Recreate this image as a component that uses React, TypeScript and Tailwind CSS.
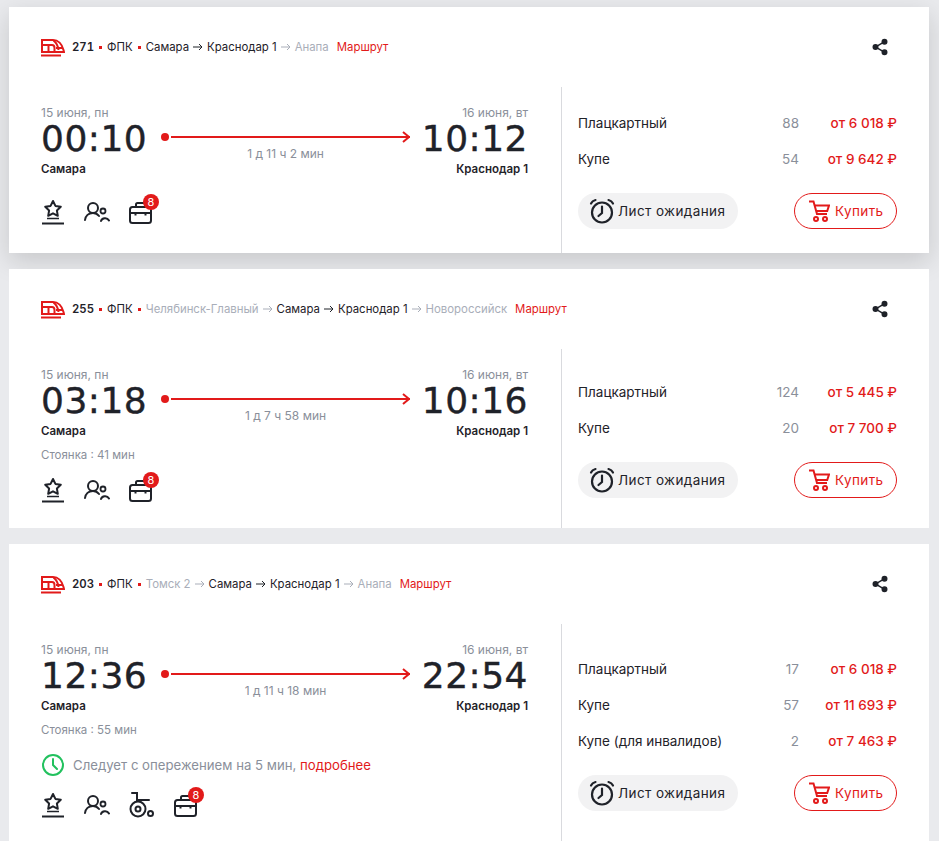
import { Share2 } from "lucide-react";

const FONT = "font-['Inter','Noto_Sans',sans-serif]";

function Logo() {
  return (
    <svg width="24" height="18" viewBox="0 0 24 18" fill="none" className="shrink-0 text-[#e21a1a]">
      <path d="M1 13V1h11c5 0 9 4 10.500 10l.5 2H1Z" stroke="currentColor" strokeWidth="2" />
      <path d="M7.500 13V6h3.500c1.500 0 2.500 1.500 2.500 3v4M12.500 1.500c2.500 2 4.500 5 5 9.500M2 6h9M15 9h7" stroke="currentColor" strokeWidth="2" />
      <rect x="0" y="15.500" width="20" height="2" fill="currentColor" />
    </svg>
  );
}

function StarIcon() {
  return (
    <svg width="24" height="26" viewBox="0 0 24 26" fill="none" stroke="#1f2229" strokeWidth="2">
      <path d="M12 2l2.400 4.900 5.400.8-3.900 3.800.9 5.300-4.800-2.500-4.800 2.500.9-5.300-3.900-3.800 5.400-.8z" strokeLinejoin="round" />
      <path d="M6 19.500h12" strokeWidth="1.500" />
      <path d="M1 24.500h22" />
    </svg>
  );
}

function PeopleIcon() {
  return (
    <svg width="26" height="22" viewBox="0 0 26 22" fill="none" stroke="#1f2229" strokeWidth="2" strokeLinecap="round">
      <circle cx="9" cy="7" r="5" />
      <path d="M1 19c.5-4 3.500-7 8-7 2.500 0 4.500 1 6 3M17 20c1-3 6-4 8-.5" />
      <circle cx="19" cy="10" r="2.500" strokeWidth="1.800" />
    </svg>
  );
}

function WheelchairIcon() {
  return (
    <svg width="26" height="26" viewBox="0 0 26 26" fill="none" stroke="#1f2229" strokeWidth="2" strokeLinecap="round">
      <path d="M3 1h5v7h12" />
      <circle cx="9" cy="17" r="7.500" />
      <circle cx="9" cy="17" r="2.500" />
      <circle cx="21.500" cy="21.500" r="2.500" />
    </svg>
  );
}

function BagIcon({ count }: { count: number }) {
  return (
    <div className="relative h-6 w-[23px]">
      <svg width="23" height="22" viewBox="0 0 23 22" fill="none" stroke="#1f2229" strokeWidth="2" className="absolute left-0 top-[2px]">
        <rect x="1" y="5" width="21" height="16" rx="2.500" />
        <path d="M7 5V2.500C7 1.700 7.700 1 8.500 1h6c.800 0 1.500.700 1.500 1.500V5M1 11h21" />
        <path d="M6.500 10v3.500M16.500 10v3.500" />
      </svg>
      <span className="absolute -right-[7px] -top-[6px] flex h-4 w-4 items-center justify-center rounded-full bg-[#e21a1a] text-[11px] leading-none text-white">
        {count}
      </span>
    </div>
  );
}

function ClockIcon() {
  return (
    <svg width="26" height="26" viewBox="0 0 26 26" fill="none" stroke="#1f2229" strokeWidth="2.200" strokeLinecap="round" className="shrink-0">
      <circle cx="13" cy="14.500" r="10" />
      <path d="M13 8.500v6.500l-3.500 3" />
      <path d="M2 5.500C3 3.500 4.500 2.500 6.500 2M24 5.500c-1-2-2.500-3-4.500-3.500" />
    </svg>
  );
}

function CartIcon() {
  return (
    <svg width="21" height="22" viewBox="0 0 21 22" fill="none" stroke="#e21a1a" strokeWidth="2" className="shrink-0">
      <path d="M0 1.500h4.500L8 14h10" />
      <path d="M5.500 5.500H20l-1.800 5.500H7" />
      <circle cx="7" cy="19" r="2" />
      <circle cx="16" cy="19" r="2" />
    </svg>
  );
}

function SmallArrow({ muted }: { muted?: boolean }) {
  return (
    <svg width="10" height="8" viewBox="0 0 10 8" fill="none" stroke={muted ? "#a9aeb9" : "#1f2229"} strokeWidth="1" className="mx-[4px] inline-block">
      <path d="M0 4h9M6 1l3 3-3 3" />
    </svg>
  );
}

type Stop = { name: string; muted?: boolean };
type Seat = { name: string; count: number; price: string };
type Train = {
  number: string;
  stops: Stop[];
  depDate: string;
  depTime: string;
  arrDate: string;
  arrTime: string;
  duration: string;
  stopInfo?: string;
  ahead?: boolean;
  wheelchair?: boolean;
  seats: Seat[];
  bodyH: string;
  seatsPt: string;
  shadow?: boolean;
};

const trains: Train[] = [
  {
    number: "271",
    stops: [{ name: "Самара" }, { name: "Краснодар 1" }, { name: "Анапа", muted: true }],
    depDate: "15 июня, пн",
    depTime: "00:10",
    arrDate: "16 июня, вт",
    arrTime: "10:12",
    duration: "1 д 11 ч 2 мин",
    seats: [
      { name: "Плацкартный", count: 88, price: "от 6 018 ₽" },
      { name: "Купе", count: 54, price: "от 9 642 ₽" },
    ],
    bodyH: "h-[166px]",
    seatsPt: "pt-[18px]",
    shadow: true,
  },
  {
    number: "255",
    stops: [
      { name: "Челябинск-Главный", muted: true },
      { name: "Самара" },
      { name: "Краснодар 1" },
      { name: "Новороссийск", muted: true },
    ],
    depDate: "15 июня, пн",
    depTime: "03:18",
    arrDate: "16 июня, вт",
    arrTime: "10:16",
    duration: "1 д 7 ч 58 мин",
    stopInfo: "Стоянка : 41 мин",
    seats: [
      { name: "Плацкартный", count: 124, price: "от 5 445 ₽" },
      { name: "Купе", count: 20, price: "от 7 700 ₽" },
    ],
    bodyH: "h-[179px]",
    seatsPt: "pt-[25px]",
  },
  {
    number: "203",
    stops: [
      { name: "Томск 2", muted: true },
      { name: "Самара" },
      { name: "Краснодар 1" },
      { name: "Анапа", muted: true },
    ],
    depDate: "15 июня, пн",
    depTime: "12:36",
    arrDate: "16 июня, вт",
    arrTime: "22:54",
    duration: "1 д 11 ч 18 мин",
    stopInfo: "Стоянка : 55 мин",
    ahead: true,
    wheelchair: true,
    seats: [
      { name: "Плацкартный", count: 17, price: "от 6 018 ₽" },
      { name: "Купе", count: 57, price: "от 11 693 ₽" },
      { name: "Купе (для инвалидов)", count: 2, price: "от 7 463 ₽" },
    ],
    bodyH: "h-[220px]",
    seatsPt: "pt-[27px]",
  },
];

function Time({ value }: { value: string }) {
  return (
    <span className="font-['DejaVu_Sans',sans-serif] text-[36px] leading-[32px] tracking-[0.5px] text-[#1f2229] [-webkit-text-stroke:0.4px_#1f2229]">
      {value}
    </span>
  );
}

function TrainCard({ train }: { train: Train }) {
  return (
    <div className={`bg-white ${train.shadow ? "shadow-[0_8px_24px_rgba(0,0,0,0.15)]" : ""}`}>
      <div className="flex h-[80px] items-center justify-between pl-8 pr-[40px]">
        <div className="flex items-center pt-[1px] text-[11.400px] text-[#1f2229]">
          <Logo />
          <span className="ml-[7px] font-semibold tabular-nums">{train.number}</span>
          <span className="mx-[5px] h-[3px] w-[3px] bg-[#e21a1a]" />
          <span>ФПК</span>
          <span className="mx-[5px] h-[3px] w-[3px] bg-[#e21a1a]" />
          {train.stops.map((stop, i) => (
            <span key={stop.name} className={`flex items-center ${stop.muted ? "text-[#a9aeb9]" : ""}`}>
              {i > 0 && <SmallArrow muted={stop.muted || train.stops[i - 1].muted} />}
              {stop.name}
            </span>
          ))}
          <span className="ml-[8px] text-[#e21a1a]">Маршрут</span>
        </div>
        <Share2 size={18} className="fill-[#1f2229] text-[#1f2229]" strokeWidth={2} />
      </div>

      <div className={`flex ${train.bodyH}`}>
        <div className="flex w-[552px] shrink-0 flex-col pl-8 pr-[33px] pt-[19px]">
          <div className="flex justify-between text-[12px] leading-[14px] text-[#8a8f9a]">
            <span>{train.depDate}</span>
            <span>{train.arrDate}</span>
          </div>
          <div className="mt-[3px] flex items-center justify-between">
            <Time value={train.depTime} />
            <div className="relative mb-[4px] ml-[14px] mr-[12px] flex flex-1 items-center">
              <span className="h-2 w-2 shrink-0 rounded-full bg-[#e21a1a]" />
              <span className="ml-[2px] h-[2px] flex-1 bg-[#e21a1a]" />
              <svg width="8" height="12" viewBox="0 0 8 12" fill="none" stroke="#e21a1a" strokeWidth="2" className="-ml-[8px]">
                <path d="M1 1l6 5-6 5" />
              </svg>
              <span className="absolute inset-x-0 top-[16px] text-center text-[12px] leading-[14px] text-[#8a8f9a]">{train.duration}</span>
            </div>
            <Time value={train.arrTime} />
          </div>
          <div className="mt-[7px] flex justify-between text-[11.500px] font-semibold leading-[14px] text-[#1f2229]">
            <span>Самара</span>
            <span>Краснодар 1</span>
          </div>
          {train.stopInfo && <div className="mt-[10px] text-[11.500px] leading-[14px] text-[#8a8f9a]">{train.stopInfo}</div>}
          {train.ahead && (
            <div className="mt-[16px] flex items-center gap-[8px] text-[13.200px] leading-[24px] text-[#8a8f9a]">
              <svg width="24" height="24" viewBox="0 0 24 24" fill="none" stroke="#22c15e" strokeWidth="2" strokeLinecap="round">
                <circle cx="12" cy="12" r="10" />
                <path d="M12 6v6l4 4" />
              </svg>
              <span>
                Следует с опережением на 5 мин, <span className="text-[#e21a1a]">подробнее</span>
              </span>
            </div>
          )}
          <div className={`flex items-center gap-[19px] ${train.ahead ? "mt-[15px]" : train.stopInfo ? "mt-[15px]" : "mt-[23px]"}`}>
            <StarIcon />
            <PeopleIcon />
            {train.wheelchair && <WheelchairIcon />}
            <BagIcon count={8} />
          </div>
        </div>

        <div className={`flex min-w-0 flex-1 flex-col border-l border-[#d9dade] pl-4 pr-8 ${train.seatsPt}`}>
          {train.seats.map((seat) => (
            <div key={seat.name} className="flex h-9 items-center text-[13.500px] text-[#1f2229]">
              <span className="flex-1">{seat.name}</span>
              <span className="w-[32px] text-right text-[#8a8f9a]">{seat.count}</span>
              <span className="w-[98px] text-right font-medium text-[#e21a1a]">{seat.price}</span>
            </div>
          ))}
          <div className="mt-[16px] flex items-center justify-between">
            <div className="flex h-9 w-[160px] items-center gap-[3px] rounded-full bg-[#f2f2f3] pl-[11px] text-[13.500px] tracking-[0.4px] text-[#1f2229]">
              <ClockIcon />
              <span>Лист ожидания</span>
            </div>
            <div className="flex h-9 w-[103px] items-center gap-[5px] rounded-full border border-[#e21a1a] pl-[14px] text-[13.500px] tracking-[0.4px] text-[#e21a1a]">
              <CartIcon />
              <span>Купить</span>
            </div>
          </div>
        </div>
      </div>
    </div>
  );
}

export default function App() {
  return (
    <div className={`h-[841px] overflow-hidden bg-[#e9eaed] px-[9px] pt-[7px] ${FONT}`}>
      <div className="flex w-[920px] flex-col gap-4">
        {trains.map((train) => (
          <TrainCard key={train.number} train={train} />
        ))}
      </div>
    </div>
  );
}
